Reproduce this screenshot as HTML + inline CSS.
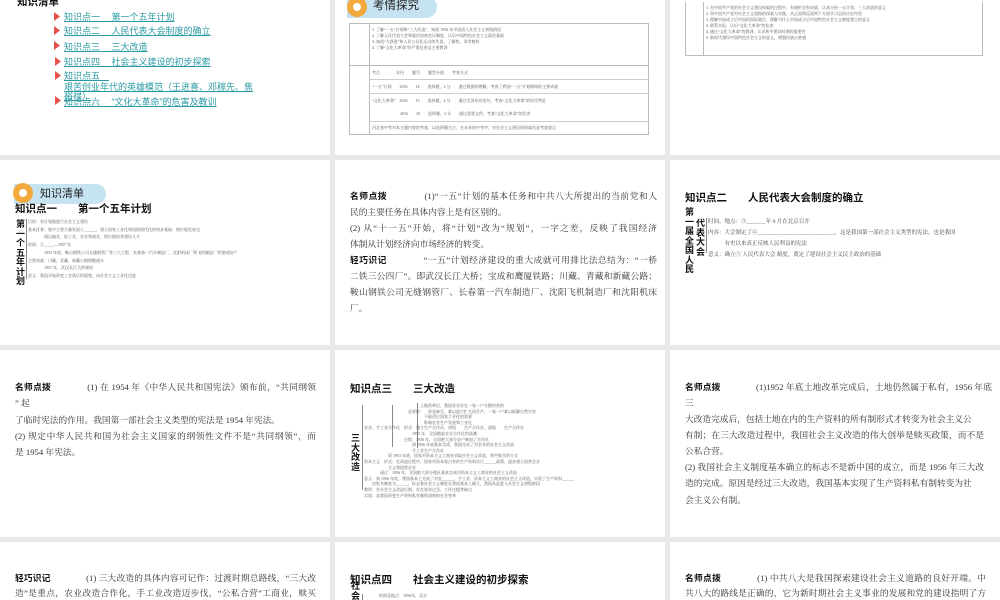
<!DOCTYPE html>
<html><head><meta charset="utf-8"><style>
*{margin:0;padding:0;box-sizing:border-box}
html,body{width:1000px;height:600px;overflow:hidden;background:#e9e9e9;font-family:"Liberation Serif","Noto Serif CJK SC",serif;color:#333}
.p{position:absolute;background:#fff;overflow:hidden}
.a{position:absolute;white-space:nowrap}
.t{font-size:8.7px;line-height:10px;text-align:justify;text-align-last:justify}
.tl{font-size:8.7px;line-height:10px}
.b{font-family:"Liberation Sans","Noto Sans CJK SC",sans-serif;font-weight:bold;color:#111}
.h{font-family:"Liberation Sans","Noto Sans CJK SC",sans-serif;font-weight:bold;font-size:10.5px;color:#111}
.lk{font-family:"Liberation Sans","Noto Sans CJK SC",sans-serif;font-size:9px;color:#2b9aa3;text-decoration:underline}
.bul{position:absolute;width:6px;height:9px;background:#e8504a;clip-path:polygon(0 0,100% 50%,0 100%)}
.tiny{font-size:4px;line-height:6px;color:#555}
.badge{position:absolute;height:22px;border-radius:0 11px 11px 0;background:#c6e3f2}
.dot{position:absolute;width:20px;height:20px;border-radius:50%;background:#f3a93c}
.dot:after{content:"";position:absolute;left:6px;top:6px;width:8px;height:8px;border-radius:50%;background:#fff}
.vt{position:absolute;font-family:"Liberation Sans","Noto Sans CJK SC",sans-serif;font-weight:bold;font-size:9px;line-height:9.5px;width:10px;color:#111}
.ln{position:absolute;background:#888}
</style></head><body>

<!-- Row 1 -->
<div class="p" style="left:0;top:0;width:330px;height:155px">
  <div class="a h" style="left:17px;top:-6px">知识清单</div>
  <div class="bul" style="left:54px;top:12px"></div><div class="a lk" style="left:64px;top:10px">知识点一　 第一个五年计划</div>
  <div class="bul" style="left:54px;top:26px"></div><div class="a lk" style="left:64px;top:24px">知识点二　 人民代表大会制度的确立</div>
  <div class="bul" style="left:54px;top:41px"></div><div class="a lk" style="left:64px;top:40px">知识点三　 三大改造</div>
  <div class="bul" style="left:55px;top:57px"></div><div class="a lk" style="left:64px;top:55px">知识点四　 社会主义建设的初步探索</div>
  <div class="bul" style="left:55px;top:71px"></div><div class="a lk" style="left:64px;top:69px">知识点五　</div>
  <div class="a lk" style="left:64px;top:80px">艰苦创业年代的英雄模范（王进喜、邓稼先、焦</div>
  <div class="a lk" style="left:64px;top:89px">裕禄）</div>
  <div class="bul" style="left:55px;top:96px"></div><div class="a lk" style="left:64px;top:95px">知识点六　 “文化大革命”的危害及教训</div>
</div>

<div class="p" style="left:335px;top:0;width:330px;height:155px">
  <div class="badge" style="left:12px;top:-4px;width:90px"></div>
  <div class="dot" style="left:12px;top:-3px"></div>
  <div class="a" style="left:38px;top:-3px;font-family:'Liberation Sans','Noto Sans CJK SC',sans-serif;font-size:11.5px;color:#222">考情探究</div>
  <div style="position:absolute;left:14px;top:23px;width:300px;height:112px;border:1px solid #bbb"></div>
  <div class="ln" style="left:34px;top:23px;width:1px;height:112px;background:#bbb"></div>
  <div class="ln" style="left:14px;top:65px;width:300px;height:1px;background:#bbb"></div>
  <div class="ln" style="left:34px;top:79px;width:280px;height:1px;background:#ccc"></div>
  <div class="ln" style="left:34px;top:93px;width:280px;height:1px;background:#ccc"></div>
  <div class="ln" style="left:34px;top:121px;width:280px;height:1px;background:#ccc"></div>
  <div class="a tiny" style="left:37px;top:27px">1. 了解“一五”计划和“三大改造”，知道 1956 年中国进入社会主义初级阶段<br>2. 了解人民代表大会和政治协商会议制度，认识中国特色社会主义政治基础<br>3. 知道“大跃进”和人民公社化运动的失误，了解焦、邓等榜样<br>4. 了解“文化大革命”的严重危害及主要教训</div>
  <div class="a tiny" style="left:37px;top:70px">考点　　　　年份　　题号　　题型分值　　考查方式</div>
  <div class="a tiny" style="left:37px;top:84px">“一五”计划　　2016　　14　　选择题，2 分　　通过数据的理解，考查了我国“一五”计划期间的主要成就</div>
  <div class="a tiny" style="left:37px;top:98px">“文化大革命”　2016　　15　　选择题，2 分　　通过毛泽东的语句，考查“文化大革命”的时代特征</div>
  <div class="a tiny" style="left:37px;top:111px">　　　　　　　2016　　16　　选择题，2 分　　通过重要文件，考查“文化大革命”的危害</div>
  <div class="a tiny" style="left:37px;top:125px">河北省中考对本主题内容的考查，以选择题为主，在未来的中考中，对社会主义建设的探索仍是考查重点</div>
</div>

<div class="p" style="left:670px;top:0;width:330px;height:155px">
  <div style="position:absolute;left:15px;top:2px;width:298px;height:54px;border:1px solid #bbb;border-top:none"></div>
  <div class="ln" style="left:33px;top:2px;width:1px;height:54px;background:#bbb"></div>
  <div class="a tiny" style="left:36px;top:5px">1. 在中国共产党的社会主义建设探索的过程中，有曲折也有成就，认真分析一五计划、三大改造的意义<br>2. 和中国共产党对社会主义道路的探索与实践，从正面和反面两个方面学习总结历史经验<br>3. 理解中国成立后中国的国际地位，理解为什么中国成立后中国特色社会主义制度建立的意义<br>4. 联系实际，认识“文化大革命”的危害<br>4. 通过“文化大革命”的教训，认识和平建设时期的重要性<br>5. 新时代建设中国特色社会主义的意义，增强民族自豪感</div>
</div>

<!-- Row 2 -->
<div class="p" style="left:0;top:160px;width:330px;height:185px">
  <div class="badge" style="left:14px;top:24px;width:92px;height:20px"></div>
  <div class="dot" style="left:13px;top:23px"></div>
  <div class="a" style="left:40px;top:25px;font-family:'Liberation Sans','Noto Sans CJK SC',sans-serif;font-size:11px;color:#222">知识清单</div>
  <div class="a h" style="left:15px;top:41px">知识点一　　第一个五年计划</div>
  <div class="vt" style="left:16px;top:60px">第一个五年计划</div>
  <div class="ln" style="left:26px;top:59px;width:1px;height:60px"></div>
  <div class="a tiny" style="left:28px;top:58px;line-height:7.7px">目的：有计划地进行社会主义建设<br>基本任务：集中主要力量发展①______，建立国家工业化和国防现代化的初步基础；相应地发展交<br>　　　　通运输业、轻工业、农业和商业，相应地培养建设人才<br>时间：②_____—1957 年<br>　　　　1953 年底，鞍山钢铁公司无缝钢管厂等三大工程，长春第一汽车制造厂、沈阳机床厂和飞机制造厂等建成投产<br>主要成就：川藏、青藏、新藏公路相继通车<br>　　　　1957 年，武汉长江大桥建成<br>意义：我国开始改变工业落后的面貌，向社会主义工业化迈进</div>
</div>

<div class="p" style="left:335px;top:160px;width:330px;height:185px">
  <div class="a t" style="left:15px;top:31px;width:307px"><span class="b">名师点拨</span>　　　　(1)“一五”计划的基本任务和中共八大所提出的当前党和人</div>
  <div class="a tl" style="left:15px;top:47px">民的主要任务在具体内容上是有区别的。</div>
  <div class="a t" style="left:15px;top:63px;width:307px">(2) 从“十一五”开始，将“计划”改为“规划”，一字之差，反映了我国经济</div>
  <div class="a tl" style="left:15px;top:79px">体制从计划经济向市场经济的转变。</div>
  <div class="a t" style="left:15px;top:95px;width:307px"><span class="b">轻巧识记</span>　　　　“一五”计划经济建设的重大成就可用排比法总结为：“一桥</div>
  <div class="a t" style="left:15px;top:111px;width:307px">二铁三公四厂”。即武汉长江大桥；宝成和鹰厦铁路；川藏、青藏和新藏公路；</div>
  <div class="a t" style="left:15px;top:127px;width:307px">鞍山钢铁公司无缝钢管厂、长春第一汽车制造厂、沈阳飞机制造厂和沈阳机床</div>
  <div class="a tl" style="left:15px;top:143px">厂。</div>
</div>

<div class="p" style="left:670px;top:160px;width:330px;height:185px">
  <div class="a h" style="left:15px;top:30px">知识点二　　人民代表大会制度的确立</div>
  <div class="vt" style="left:15px;top:48px;font-size:9px">第一届全国人民</div>
  <div class="vt" style="left:26px;top:59px;font-size:9px">代表大会</div>
  <div class="ln" style="left:36px;top:58px;width:1px;height:35px"></div>
  <div class="a" style="left:38px;top:57px;font-size:5.5px;line-height:11px;color:#444">时间、地点：③_______年 9 月在北京召开<br>内容：大会制定了④____________________________，这是我国第一部社会主义类型的宪法，也是我国<br>　　　有史以来真正反映人民利益的宪法<br>意义：确立⑤ 人民代表大会 制度，奠定了建设社会主义民主政治的基础</div>
</div>

<!-- Row 3 -->
<div class="p" style="left:0;top:350px;width:330px;height:187px">
  <div class="a t" style="left:15px;top:32px;width:301px"><span class="b">名师点拨</span>　　　　(1) 在 1954 年《中华人民共和国宪法》颁布前，“共同纲领</div>
  <div class="a tl" style="left:15px;top:48px">” 起</div>
  <div class="a tl" style="left:15px;top:65px">了临时宪法的作用。我国第一部社会主义类型的宪法是 1954 年宪法。</div>
  <div class="a t" style="left:15px;top:81px;width:301px">(2) 规定中华人民共和国为社会主义国家的纲领性文件不是“共同纲领”，而</div>
  <div class="a tl" style="left:15px;top:97px">是 1954 年宪法。</div>
</div>

<div class="p" style="left:335px;top:350px;width:330px;height:187px">
  <div class="a h" style="left:15px;top:31px">知识点三　　三大改造</div>
  <div class="vt" style="left:16px;top:84px;width:11px">三大改造</div>
  <div class="ln" style="left:27px;top:55px;width:1px;height:85px"></div>
  <div class="ln" style="left:57px;top:55px;width:1px;height:42px"></div>
  <div class="ln" style="left:82px;top:53px;width:1px;height:45px"></div>
  <div class="a tiny" style="left:29px;top:53px;line-height:5.6px">　　　　　　　　　　　　　　土地改革后，我国农业存在一家一户分散经营的<br>　　　　　　　　　　　必要性：　资金缺乏，难以进行扩大再生产，一家一户难以抵御自然灾害<br>　　　　　　　　　　　　　　　不能适应国家工业化的需要<br>　　　　　　　　　　　　　　　影响农业生产发展和工业化<br>农业、手工业合作化　形式：建立生产合作社、初级　　生产合作社、高级　　生产合作社<br>　　　　　　　　　　　　1955 年，全国掀起农业合作化的高潮<br>　　　　　　　　　　过程：1956 年，全国绝大部分农户参加了合作社<br>　　　　　　　　　　　　到 1956 年底基本完成，我国完成了对农业的社会主义改造<br>　　　　　　　　　　　　手工业生产合作社<br>　　　　　　原 1953 年底，国家对资本主义工商业采取社会主义改造，和平赎买的方式<br>资本主义　形式：在改造过程中，国家对资本家占有的生产资料实行______政策，逐步建立国营企业<br>　　　　　　主义和国营企业<br>　　　　通过：1956 年，全国绝大部分地区基本完成对资本主义工商业的社会主义改造<br>意义：到 1956 年底，我国基本上完成了对农______、手工业、资本主义工商业的社会主义改造，实现了生产资料______<br>　　由私有制变为______，标志着社会主义制度在我国基本上确立，我国从此进入社会主义初级阶段<br>教训：在社会主义改造后期，存在要求过急、工作过粗等缺点<br>实质：是我国改变生产资料私有制的深刻的社会变革</div>
</div>

<div class="p" style="left:670px;top:350px;width:330px;height:187px">
  <div class="a t" style="left:15px;top:32px;width:307px"><span class="b">名师点拨</span>　　　　(1)1952 年底土地改革完成后，土地仍然属于私有，1956 年底</div>
  <div class="a tl" style="left:15px;top:48px">三</div>
  <div class="a tl" style="left:15px;top:64px">大改造完成后，包括土地在内的生产资料的所有制形式才转变为社会主义公</div>
  <div class="a t" style="left:15px;top:80px;width:299px">有制；在三大改造过程中，我国社会主义改造的伟大创举是赎买政策，而不是</div>
  <div class="a tl" style="left:15px;top:96px">公私合营。</div>
  <div class="a t" style="left:15px;top:112px;width:299px">(2) 我国社会主义制度基本确立的标志不是新中国的成立，而是 1956 年三大改</div>
  <div class="a tl" style="left:15px;top:128px">造的完成。原因是经过三大改造，我国基本实现了生产资料私有制转变为社</div>
  <div class="a tl" style="left:15px;top:145px">会主义公有制。</div>
</div>

<!-- Row 4 -->
<div class="p" style="left:0;top:542px;width:330px;height:58px">
  <div class="a t" style="left:15px;top:31px;width:301px"><span class="b">轻巧识记</span>　　　　(1) 三大改造的具体内容可记作：过渡时期总路线，“三大改</div>
  <div class="a t" style="left:15px;top:46px;width:301px">造”是重点，农业改造合作化，手工业改造迈步伐，“公私合营”工商业，赎买</div>
</div>

<div class="p" style="left:335px;top:542px;width:330px;height:58px">
  <div class="a h" style="left:15px;top:30px">知识点四　　社会主义建设的初步探索</div>
  <div class="vt" style="left:16px;top:40px">社会</div>
  <div class="ln" style="left:27px;top:52px;width:1px;height:8px"></div>
  <div class="a tiny" style="left:44px;top:51px">时间及地点：1956年，北京</div>
</div>

<div class="p" style="left:670px;top:542px;width:330px;height:58px">
  <div class="a t" style="left:15px;top:31px;width:301px"><span class="b">名师点拨</span>　　　　(1) 中共八大是我国探索建设社会主义道路的良好开端。中</div>
  <div class="a t" style="left:15px;top:46px;width:301px">共八大的路线是正确的，它为新时期社会主义事业的发展和党的建设指明了方</div>
</div>

</body></html>
